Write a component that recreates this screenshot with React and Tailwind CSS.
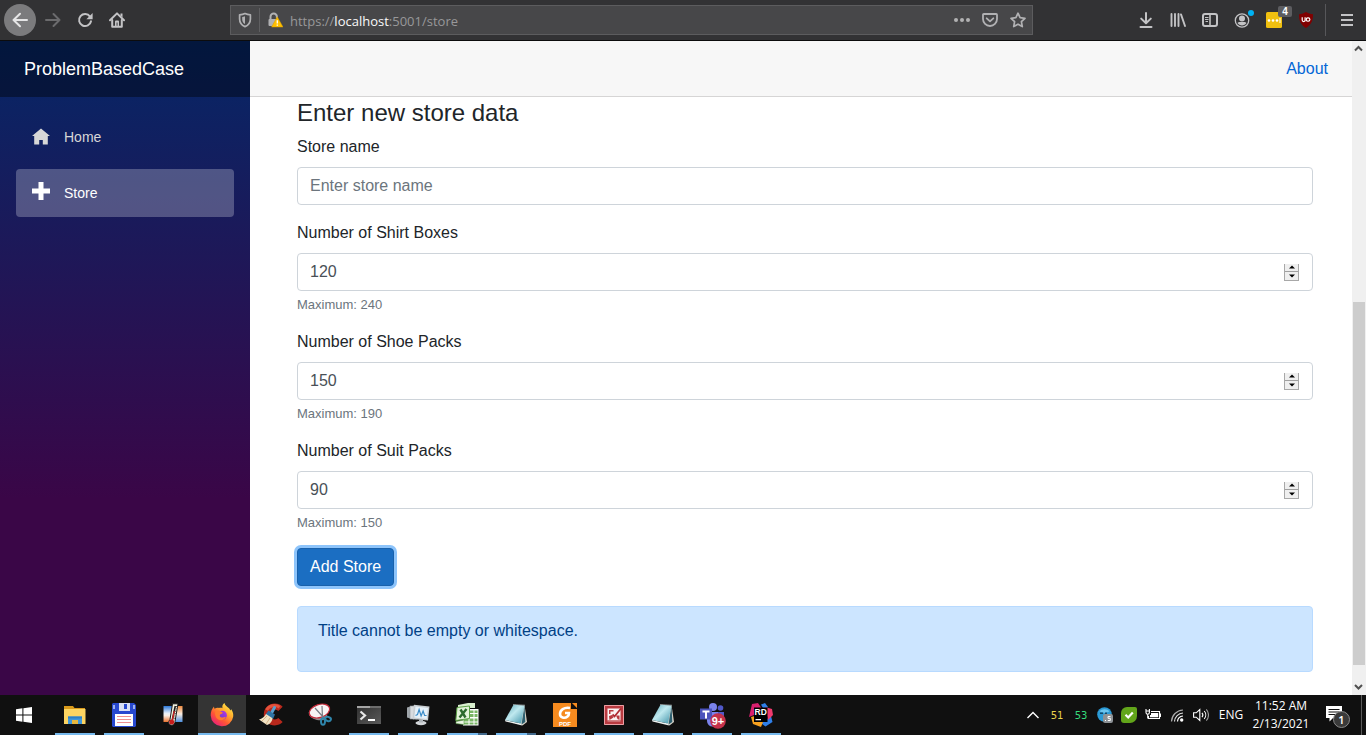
import { useState } from 'react';

/* ---------- Browser toolbar icons ---------- */

const stroke = { fill: 'none', stroke: 'currentColor', strokeWidth: 2, strokeLinecap: 'round', strokeLinejoin: 'round' };

function Ico({ children, size = 16 }) {
  return (
    <svg width={size} height={size} viewBox={`0 0 ${size} ${size}`} aria-hidden="true" className="block shrink-0">
      {children}
    </svg>
  );
}

const BackIcon = () => <Ico><path {...stroke} d="M15 8H1.5M8 1.8L1.5 8L8 14.2" /></Ico>;
const ForwardIcon = () => <Ico><path {...stroke} d="M1 8h13.5M8.5 2L14.5 8L8.5 14" /></Ico>;
const ReloadIcon = () => (
  <Ico>
    <path {...stroke} d="M13 4.6A6 6 0 1 0 14 9.2" />
    <path fill="currentColor" d="M15.6 1v6.2H9.4z" />
  </Ico>
);
const HomeIcon = () => (
  <Ico>
    <path {...stroke} d="M1 8.3L8 1.4L15 8.3" />
    <path {...stroke} d="M3.2 8V14.8H12.8V8" />
    <path fill="currentColor" d="M6 14.8V9.6a1 1 0 0 1 1-1h2a1 1 0 0 1 1 1v5.2zM11.5 1.4h2v4l-2-2z" />
    <path fill="#323234" d="M7.6 10.6h.9v3.2h-.9z" />
  </Ico>
);
const ShieldIcon = () => (
  <Ico>
    <path {...stroke} strokeWidth="1.7" d="M8 1.6C6 2.6 4.300 2.800 2.600 2.800V7c0 3.800 2 6.200 5.400 7.600 3.400-1.400 5.400-3.800 5.400-7.600V2.800C11.700 2.800 10 2.600 8 1.600z" />
    <path fill="currentColor" d="M8 4.300C7 4.800 6.100 5 5.200 5V7.200c0 2.200.9 3.800 2.800 4.800z" />
  </Ico>
);
const LockWarnIcon = () => (
  <Ico>
    <path fill="none" stroke="#b1b1b3" strokeWidth="2" d="M3.500 8V4.700a3.200 3.200 0 0 1 6.400 0v1.200" />
    <rect x="1.500" y="7" width="9.500" height="7" rx="1" fill="#b1b1b3" />
    <path d="M10.200 4.800L16 15H4.600z" fill="#ffbf00" stroke="#d89e00" strokeWidth=".5" strokeLinejoin="round" />
    <path d="M10.300 8.200v3.400M10.300 12.600v1.200" stroke="#fff" strokeWidth="1.300" />
  </Ico>
);
const DotsIcon = () => (
  <Ico><g fill="currentColor"><circle cx="2" cy="8" r="2" /><circle cx="8" cy="8" r="2" /><circle cx="14" cy="8" r="2" /></g></Ico>
);
const PocketIcon = () => (
  <Ico>
    <path {...stroke} strokeWidth="1.800" d="M1.800 2h12.400a.8.8 0 0 1 .8.8V7a7 7 0 0 1-14 0V2.800a.8.8 0 0 1 .8-.8z" />
    <path {...stroke} strokeWidth="1.800" d="M4.700 6.300L8 9.400l3.300-3.100" />
  </Ico>
);
const StarIcon = () => (
  <Ico><path {...stroke} strokeWidth="1.700" d="M8 1.200l2.100 4.500 4.900.6-3.600 3.400.9 4.900L8 12.200l-4.300 2.400.9-4.900L1 6.300l4.900-.6z" /></Ico>
);
const DownloadIcon = () => (
  <Ico><path {...stroke} d="M8 1v10M3.200 6.600L8 11.300l4.800-4.700M2.500 15h11" /></Ico>
);
const LibraryIcon = () => (
  <Ico><path {...stroke} d="M1.500 2v12M5 2v12M8.500 2v12M11 2.400L15 14" strokeWidth="1.900" /></Ico>
);
const SidebarIcon = () => (
  <Ico>
    <rect x="1" y="2" width="14" height="12" rx="2" {...stroke} />
    <path {...stroke} strokeWidth="1.600" d="M8 2v12" />
    <path stroke="currentColor" strokeWidth="1" d="M3 5.500h3.500M3 7.500h3.500M3.500 9.500h2.500" />
  </Ico>
);
const AccountIcon = () => (
  <Ico>
    <circle cx="8" cy="8.500" r="6.700" fill="none" stroke="currentColor" strokeWidth="1.300" />
    <circle cx="8" cy="6.500" r="3" fill="currentColor" />
    <path fill="currentColor" d="M3.500 11c1-1.300 2.200-1 2.800-1h3.400c.6 0 1.800-.3 2.800 1a5.300 5.300 0 0 1-9 0z" />
  </Ico>
);
const UblockIcon = () => (
  <Ico>
    <path fill="#800000" d="M8 0c2 1.300 4.400 2 7 2.300 0 6.500-1.500 10.300-7 13.700C2.500 12.600 1 8.800 1 2.300 3.600 2 6 1.300 8 0z" />
    <path fill="none" stroke="#fff" strokeWidth="1.200" d="M4.200 5.300v2.800a1.400 1.400 0 0 0 2.900 0V5.300v3.900" />
    <rect x="8.300" y="5.800" width="3.500" height="3.400" rx="1.500" fill="none" stroke="#fff" strokeWidth="1.200" />
  </Ico>
);
const MenuIcon = () => <Ico><path stroke="currentColor" strokeWidth="2" d="M2 3h12M2 8h12M2 13h12" /></Ico>;

function ToolButton({ label, children, className = '' }) {
  return (
    <button type="button" aria-label={label} className={`relative flex size-8 shrink-0 items-center justify-center ${className}`}>
      {children}
    </button>
  );
}

function BrowserBar() {
  return (
    <header className="flex h-[41px] shrink-0 items-center border-b border-[#0c0c0d] bg-[#323234] pl-1 pr-[3px] text-[#c3c3c5]">
      <nav className="flex items-center" aria-label="Browser navigation">
        <ToolButton label="Back" className="mr-px rounded-full bg-[#7b7b7d] text-[#e6e6e7]"><BackIcon /></ToolButton>
        <ToolButton label="Forward" className="text-[#6b6b6d]"><ForwardIcon /></ToolButton>
        <ToolButton label="Reload"><ReloadIcon /></ToolButton>
        <ToolButton label="Home page"><HomeIcon /></ToolButton>
      </nav>
      <div className="mx-[97px] flex h-[30px] min-w-0 flex-1 items-center border border-[#5c5c5e] bg-[#474749] text-[#b1b1b3]">
        <span className="flex w-7 shrink-0 justify-center"><ShieldIcon /></span>
        <span className="h-6 w-px bg-[#5f5f61]" />
        <span className="flex w-[30px] shrink-0 justify-center"><LockWarnIcon /></span>
        <a href="https://localhost:5001/store" className="min-w-0 flex-1 truncate pt-px font-['Open_Sans','Noto_Sans',sans-serif] text-[13px] leading-5 text-[#98989a]">
          https://<span className="text-[#f9f9fa]">localhost</span>:5001/store
        </a>
        <button type="button" aria-label="Page actions" className="flex w-7 justify-center"><DotsIcon /></button>
        <button type="button" aria-label="Save to Pocket" className="flex w-7 justify-center"><PocketIcon /></button>
        <button type="button" aria-label="Bookmark this page" className="flex w-7 justify-center"><StarIcon /></button>
      </div>
      <div className="flex items-center">
        <ToolButton label="Downloads"><DownloadIcon /></ToolButton>
        <ToolButton label="Library"><LibraryIcon /></ToolButton>
        <ToolButton label="Sidebars"><SidebarIcon /></ToolButton>
        <ToolButton label="Account">
          <AccountIcon />
          <span className="absolute right-1 top-1.5 size-1.5 rounded-full bg-[#00b3f4]" />
        </ToolButton>
        <ToolButton label="Password extension">
          <Ico>
            <rect width="16" height="16" rx="1.500" fill="#f0c010" />
            <g fill="#fff"><circle cx="3" cy="8.500" r="1.300" /><circle cx="7" cy="8.500" r="1.300" /><circle cx="11" cy="8.500" r="1.300" /><path d="M13.500 6h1v5h-1z" /></g>
          </Ico>
          <span className="absolute -right-0.5 top-0.5 flex h-[11px] w-3.5 items-center justify-center rounded-xs bg-[#5d5d60] font-['Liberation_Sans',sans-serif] text-[10px] font-bold leading-none text-white">4</span>
        </ToolButton>
        <ToolButton label="Content blocker"><UblockIcon /></ToolButton>
      </div>
      <span className="ml-[3px] mr-[5px] h-8 w-px bg-[#57575a]" />
      <ToolButton label="Open menu"><MenuIcon /></ToolButton>
    </header>
  );
}

/* ---------- Application ---------- */

function Sidebar() {
  return (
    <aside className="flex w-[250px] shrink-0 flex-col bg-[linear-gradient(180deg,rgb(5,39,103)_0%,#3a0647_70%)]">
      <div className="flex h-14 items-center bg-black/40 pl-6">
        <a href="#" className="text-lg text-white">ProblemBasedCase</a>
      </div>
      <nav className="flex flex-col gap-2 p-4 text-[14px]" aria-label="Main">
        <a href="#home" className="flex h-12 items-center rounded px-4 text-[#d7d7d7]">
          <span className="w-8">
            <svg width="18" height="18" viewBox="0 0 18 18" aria-hidden="true">
              <path fill="currentColor" d="M9 0.500L0 8h2.200v8.500h5V12h3.600v4.500h5V8H18z" />
            </svg>
          </span>
          Home
        </a>
        <a href="#store" aria-current="page" className="flex h-12 items-center rounded bg-white/25 px-4 text-white">
          <span className="w-8 pb-1">
            <svg width="18" height="18" viewBox="0 0 18 18" aria-hidden="true">
              <path fill="currentColor" d="M6.500 0h5v6.500H18v5h-6.500V18h-5v-6.500H0v-5h6.500z" />
            </svg>
          </span>
          Store
        </a>
      </nav>
    </aside>
  );
}

function NumberField({ id, label, initial, max }) {
  const [value, setValue] = useState(initial);
  const step = (d) => setValue((v) => Math.min(max, Math.max(0, Number(v) + d)));
  return (
    <div className="mb-4">
      <label htmlFor={id} className="mb-2 block">{label}</label>
      <div className="flex h-[38px] items-center rounded border border-[#ced4da] bg-white pr-[13px]">
        <input
          id={id}
          type="number"
          min={0}
          max={max}
          value={value}
          onChange={(e) => setValue(e.target.value)}
          aria-describedby={`${id}-help`}
          className="h-full min-w-0 flex-1 appearance-none rounded bg-transparent px-3 text-[#495057] outline-none [&::-webkit-inner-spin-button]:appearance-none"
        />
        <span className="flex w-[15px] flex-col border-x border-b border-[#a8a8a8] bg-[#efefef]">
          <button type="button" aria-label={`Increase ${label}`} onClick={() => step(1)} className="flex h-2 items-center justify-center border-b border-[#a0a0a0]">
            <svg width="6" height="4" viewBox="0 0 6 4" aria-hidden="true"><path d="M0 3.500L3 .5L6 3.500z" /></svg>
          </button>
          <button type="button" aria-label={`Decrease ${label}`} onClick={() => step(-1)} className="flex h-2 items-center justify-center">
            <svg width="6" height="4" viewBox="0 0 6 4" aria-hidden="true"><path d="M0 .5L3 3.500L6 .5z" /></svg>
          </button>
        </span>
      </div>
      <small id={`${id}-help`} className="mt-1 block text-[13px] leading-[19px] text-[#6c757d]">Maximum: {max}</small>
    </div>
  );
}

function StorePage() {
  return (
    <div className="flex min-w-0 flex-1 flex-col bg-white">
      <div className="flex h-14 shrink-0 items-center justify-end border-b border-[#d6d5d5] bg-[#f7f7f7] pr-6">
        <a href="#about" className="text-[#0366d6]">About</a>
      </div>
      <main className="flex-1 pl-[47px] pr-[39px] text-[#212529]">
        <h1 className="mb-2 pt-0.5 text-2xl leading-7">Enter new store data</h1>
        <form onSubmit={(e) => e.preventDefault()}>
          <div className="mb-4">
            <label htmlFor="store-name" className="mb-2 block">Store name</label>
            <input
              id="store-name"
              type="text"
              placeholder="Enter store name"
              className="block h-[38px] w-full rounded border border-[#ced4da] px-3 text-[#495057] outline-none placeholder:text-[#6c757d]"
            />
          </div>
          <NumberField id="shirt-boxes" label="Number of Shirt Boxes" initial={120} max={240} />
          <NumberField id="shoe-packs" label="Number of Shoe Packs" initial={150} max={190} />
          <NumberField id="suit-packs" label="Number of Suit Packs" initial={90} max={150} />
          <button type="submit" className="h-[38px] rounded border border-[#1861ac] bg-[#1b6ec2] px-3 text-white ring-3 ring-[#8dc4fb]">
            Add Store
          </button>
        </form>
        <div role="alert" className="mt-5 rounded border border-[#b8daff] bg-[#cce5ff] px-5 py-3 text-[#004085]">
          <p className="mb-4">Title cannot be empty or whitespace.</p>
        </div>
      </main>
    </div>
  );
}

function ScrollBar() {
  const chevron = { fill: 'none', stroke: '#505050', strokeWidth: 2 };
  return (
    <div className="flex w-3.5 shrink-0 flex-col items-center bg-[#f0f0f0]" aria-hidden="true">
      <svg width="14" height="17" viewBox="0 0 14 17"><path {...chevron} d="M3 9.500L6.500 6L10 9.500" /></svg>
      <span className="flex-[244]" />
      <span className="w-3 flex-[363] bg-[#cdcdcd]" />
      <span className="flex-[13]" />
      <svg width="14" height="17" viewBox="0 0 14 17"><path {...chevron} d="M3 7L6.500 10.500L10 7" /></svg>
    </div>
  );
}

/* ---------- Taskbar ---------- */

const WindowsLogo = () => (
  <Ico size={24}><path fill="#fff" d="M4 6.300L10.400 5.300V11.500H4zM11.400 5.200L20 4V11.500H11.400zM4 12.500h6.400v6.200L4 17.800zM11.400 12.500H20V20l-8.600-1.200z" /></Ico>
);
const ExplorerIcon = () => (
  <Ico size={24}>
    <path fill="#d99a1c" d="M1 3h9l1.500 2H22v4H1z" />
    <path fill="#fcd462" d="M1 6h21.500v15H1z" />
    <path fill="#3f97dc" d="M5 13.500h14V21h-4v-4H9v4H5z" />
    <path fill="#2c7fc5" d="M5 13.500h14v2H5z" />
    <path fill="#e9b93f" d="M9 17h6v4H9z" />
  </Ico>
);
const FloppyIcon = () => (
  <Ico size={24}>
    <path fill="#2748cf" d="M1 0h21l2 2v21l-1 1H1l-1-1V1z" />
    <path fill="#d7def4" d="M7 0h11v8H7z" /><path fill="#2748cf" d="M12 1h3v5h-3z" />
    <path fill="#fff" d="M3 11h18v12H3z" />
    <path stroke="#ee9090" strokeWidth="1.200" d="M5 13.500h14M5 16.500h14M5 19.500h14" />
    <path fill="#9bb0ee" d="M1 2h2v4H1zM21 2h2v4h-2z" />
  </Ico>
);
const ThermoIcon = () => (
  <Ico size={24}>
    <defs>
      <linearGradient id="th-l" x1="0" y1="0" x2="0" y2="1"><stop stopColor="#2c78d8" /><stop offset=".45" stopColor="#e8f0fa" /><stop offset=".6" stopColor="#fbeee4" /><stop offset="1" stopColor="#e8702c" /></linearGradient>
      <linearGradient id="th-r" x1="0" y1="0" x2="0" y2="1"><stop stopColor="#ee8a3e" /><stop offset=".5" stopColor="#faece0" /><stop offset="1" stopColor="#4b8fe0" /></linearGradient>
    </defs>
    <path fill="url(#th-l)" d="M2.500 3h9v16h-9z" /><path fill="url(#th-r)" d="M12 3h9.500v16H12z" />
    <path fill="#f6f5e2" stroke="#1a1a1a" strokeWidth="1" d="M11.500 .8h5.500L14 18.500c.3 2-1.200 3.700-3.300 3.700S7 20.300 7.800 18.300L9 16.500z" />
    <path stroke="#1a1a1a" strokeWidth="1.600" d="M14.300 3L11.300 17" />
    <path stroke="#d02020" strokeWidth="1.300" d="M13.300 8L11.200 18" /><circle cx="10.700" cy="19" r="2.500" fill="#c81c1c" />
    <path stroke="#444" strokeWidth="1" strokeDasharray="1 1.400" d="M15.700 3L13.200 16" />
  </Ico>
);
const FirefoxIcon = () => (
  <Ico size={24}>
    <defs>
      <linearGradient id="ff-a" x1=".9" y1="0" x2=".15" y2="1"><stop stopColor="#fff44f" /><stop offset=".35" stopColor="#ffb02e" /><stop offset=".65" stopColor="#ff5634" /><stop offset="1" stopColor="#e31587" /></linearGradient>
      <linearGradient id="ff-b" x1="1" y1="0" x2="0" y2="1"><stop stopColor="#b833e1" /><stop offset="1" stopColor="#5b3fd0" /></linearGradient>
    </defs>
    <path fill="url(#ff-a)" d="M14.500 0c.4 2.500 3 4 4.500 5.300.7.7 1 1.400 1.200 2.200l1.100-1.200C23 9 23.500 11 23.200 13.500A11.300 11.300 0 0 1 .7 12.500C.6 9 1.800 5.800 4 3.500c0 1 .2 1.700.6 2.300C6 4.800 7.500 4.600 9 5c1.300-.3 2.600-.2 3.500.2-.6-2 .2-4 2-5.200z" />
    <circle cx="12.300" cy="12.300" r="4.600" fill="url(#ff-b)" />
    <path fill="#ff7b2e" d="M5.500 8c2.500-1.200 4.500-.5 5.700.8 1 .3 1.700.6 1.500 1.200-.4 1-2.200.8-2.800 2-.5 1.300.7 2.800 2.500 2.500 1.500-.2 2-.9 3.500-.5-1.500 3.200-5 4-7.600 2.500C5.500 15 4.500 11 5.500 8z" />
  </Ico>
);
const CCleanerIcon = () => (
  <Ico size={26}>
    <path fill="none" stroke="#b8281c" strokeWidth="6" d="M22.500 6.800A8 8 0 1 0 22.500 18" />
    <path fill="none" stroke="#e4523c" strokeWidth="3" d="M21.500 5.200A9 9 0 0 0 8.500 8" />
    <path stroke="#5a9fce" strokeWidth="3" strokeLinecap="round" d="M16.500 5.500L13.500 11" />
    <path fill="#2f73a3" d="M10.500 8.500l6.500 4-2 4.500-7.500-4.500z" />
    <path fill="#f2e3c4" d="M8 12l6.500 4.300c-.3 3-2 5.700-5.500 6.700L1 17.500c3-.8 5.500-2.500 7-5.500z" />
    <path stroke="#cfa878" strokeWidth=".8" d="M9 14L4 19M12 16L8 22" />
  </Ico>
);
const SnipIcon = () => (
  <Ico size={26}>
    <ellipse cx="11" cy="12.500" rx="9.500" ry="5.500" transform="rotate(12 11 12.500)" fill="#8f8a8c" />
    <ellipse cx="12.500" cy="9" rx="10.500" ry="6.500" transform="rotate(-18 12.500 9)" fill="#f8f4f5" stroke="#c42a3a" strokeWidth="1.200" />
    <path stroke="#777c84" strokeWidth="1.200" d="M8 6l9 10M15 4L15.500 16" />
    <g fill="none" stroke="#2f86ac" strokeWidth="2"><ellipse cx="16" cy="19.500" rx="2" ry="3.200" /><ellipse cx="21" cy="17" rx="3" ry="2" transform="rotate(15 21 17)" /></g>
  </Ico>
);
const TerminalIcon = () => (
  <Ico size={24}>
    <defs><linearGradient id="tm" x1="0" y1="0" x2="1" y2="1"><stop stopColor="#303030" /><stop offset="1" stopColor="#5a5a5a" /></linearGradient></defs>
    <path fill="url(#tm)" d="M0 3h24v18H0z" /><path fill="#a5a5a5" d="M0 3h13v2H0z" /><path fill="#6d6d6d" d="M13 3h11v2H13z" />
    <path fill="none" stroke="#e8e8e8" strokeWidth="2.200" d="M3.500 8.500L8 12.500L3.500 16.500" /><path stroke="#fff" strokeWidth="2" d="M11 17h7" />
  </Ico>
);
const MonitorIcon = () => (
  <Ico size={24}>
    <path fill="#9fa5aa" d="M1 4.500l7-2v14l-7-2z" /><path fill="#d9dcdf" stroke="#8e959a" strokeWidth=".6" d="M4 3h7v13H4z" />
    <path fill="#c9ced2" d="M8 1.800L23.500 3.500l-1.500 14L6.500 16z" /><path fill="#e6f1f9" d="M9.500 3.500L22 5l-1.300 11L8.300 14.500z" />
    <path fill="none" stroke="#3c8cc8" strokeWidth="1.200" d="M9.500 12.500l2-1 1.600-5 2 6.500 2-5 1.500 4.500h2" />
    <ellipse cx="15" cy="20" rx="5.500" ry="2.200" fill="#d3d7da" /><path fill="#b0b6bb" d="M13 16.500h4v3h-4z" />
  </Ico>
);
const ExcelIcon = () => (
  <Ico size={24}>
    <path fill="#d9efcf" d="M3 2L13 0l7 0v5H3z" /><path fill="#fff" d="M8 6h15.500v16.500H8z" /><path fill="#79b565" d="M15 7.500h3.500V10H15zM19.500 7.500h3V10h-3zM15 11h3.500v3H15zM19.500 11h3v3h-3zM9 16h4.500v2.500H9zM14.500 15.500h4V18.500h-4zM19.500 15.500h3V18.500h-3zM9 19.500h4.500v2H9zM14.500 19.500h4v2h-4zM19.500 19.500h3v2h-3z" />
    <path fill="#e3f3da" stroke="#5ca046" strokeWidth="1" d="M2 4.500L14.500 3v12.500L.8 17.500z" />
    <path fill="none" stroke="#2c6a2c" strokeWidth="2.400" d="M5.500 6.500l5 8M11.500 6L4.500 14.500" />
    <path fill="#eef7ea" stroke="#5ca046" strokeWidth=".6" d="M1 18.500L9 17v4.500L1 20.500z" />
  </Ico>
);
const NotepadIcon = () => (
  <Ico size={24}>
    <defs><linearGradient id="np" x1="0" y1="0" x2="1" y2="1"><stop stopColor="#5aa5b5" /><stop offset=".45" stopColor="#bfe9ef" /><stop offset="1" stopColor="#3f92a8" /></linearGradient></defs>
    <path fill="#d5d2c8" d="M20.500 2l2.500 17-4.500 3.500-3-2z" />
    <path fill="#2c5f70" d="M20.500 2.500l.8 16.500-3.800 2.500z" />
    <path fill="#f0f3f2" d="M1 17l16 3.500 1 2L1.500 18.500z" />
    <path fill="url(#np)" d="M9.500 1.800L20.500 2.500L17 20.500L1 17z" />
    <path stroke="#e0e7e9" strokeDasharray="1 1" d="M9.500 1.500L21 2.200" />
  </Ico>
);
const FoxitIcon = () => (
  <Ico size={24}>
    <path fill="#f68b1f" d="M0 0h24v24H0z" /><path fill="#101010" d="M18 0h1l5 5v1h-6z" /><path fill="#f68b1f" d="M19.500 0H24v4.500z" />
    <path fill="none" stroke="#fff" strokeWidth="2.600" d="M17 5C11 4 7 7 7 11c0 3.500 4.500 5 7.500 2.500 1.200-1 1.500-2.200 1.500-3.500h-4" />
    <text x="12" y="23" textAnchor="middle" fontFamily="Liberation Sans, sans-serif" fontWeight="bold" fontSize="6" fill="#fff">PDF</text>
  </Ico>
);
const RedAppIcon = () => (
  <Ico size={24}>
    <path fill="#b93a40" d="M2 2h20v20H2z" /><path fill="none" stroke="#e9a0a4" d="M2.500 2.500h19v19h-19z" />
    <path fill="#fbf3f3" d="M5.500 5.500h13v12h-13z" /><path fill="#c96a6e" d="M5.500 17.500h13v1.500h-13z" />
    <path fill="#b93a40" d="M7 7h4.500v1.500H8.500V11H7z" />
    <path fill="none" stroke="#b02a32" strokeWidth="1.800" d="M10.500 11.500l2 2L19 5.500" /><path fill="#b93a40" d="M7 13l3-1 1.500 2.500L7.500 17zM14 12.500h3.500V17l-2-1z" />
  </Ico>
);
const TeamsIcon = () => (
  <Ico size={28}>
    <circle cx="15" cy="6" r="4" fill="#7b83eb" /><circle cx="22.500" cy="7" r="2.800" fill="#5059c9" />
    <path fill="#5059c9" d="M18 11h8v7a4 4 0 0 1-8 2z" /><path fill="#7b83eb" d="M9 11h11v9a5.500 5.500 0 0 1-11 0z" />
    <path fill="#4b53bc" d="M2 7.500h12v11H2z" /><path stroke="#fff" strokeWidth="2" d="M4.500 10.500h7M8 10.500v7" />
    <circle cx="20" cy="20" r="7.800" fill="#c4314b" />
    <text x="20" y="24" textAnchor="middle" fontFamily="Liberation Sans, sans-serif" fontWeight="bold" fontSize="11" fill="#fff">9+</text>
  </Ico>
);
const RiderIcon = () => (
  <Ico size={24}>
    <path fill="#d9206e" d="M3 1l6-1 4 6v6H5L0 14z" /><path fill="#2f7fe8" d="M12 1.500l4-1.500 3 4-4 3zM15 18l7-5 1.500 6-7 4.500-4-3z" />
    <path fill="#f03a6e" d="M16 4l7 2 1 6-5 5z" /><path fill="#f7a11f" d="M2 14l4-1 8 6-2 5-8-3z" />
    <path fill="#000" d="M5 4.500h13.500V19H5z" />
    <text x="11.700" y="12" textAnchor="middle" fontFamily="Liberation Sans, sans-serif" fontWeight="bold" fontSize="8.500" fill="#fff">RD</text>
    <path fill="#fff" d="M6.500 16h5.500v1.300H6.500z" />
  </Ico>
);

const apps = [
  { name: 'File Explorer', Icon: ExplorerIcon, state: 'open' },
  { name: 'Total Commander', Icon: FloppyIcon, state: 'open' },
  { name: 'Temperature monitor', Icon: ThermoIcon, state: 'idle' },
  { name: 'Firefox', Icon: FirefoxIcon, state: 'active' },
  { name: 'CCleaner', Icon: CCleanerIcon, state: 'idle' },
  { name: 'Snipping Tool', Icon: SnipIcon, state: 'idle' },
  { name: 'Terminal', Icon: TerminalIcon, state: 'open' },
  { name: 'System monitor', Icon: MonitorIcon, state: 'open' },
  { name: 'Excel', Icon: ExcelIcon, state: 'stacked' },
  { name: 'Notepad', Icon: NotepadIcon, state: 'stacked' },
  { name: 'PDF reader', Icon: FoxitIcon, state: 'open' },
  { name: 'Image viewer', Icon: RedAppIcon, state: 'open' },
  { name: 'Notepad notes', Icon: NotepadIcon, state: 'open' },
  { name: 'Teams', Icon: TeamsIcon, state: 'open' },
  { name: 'Rider', Icon: RiderIcon, state: 'open' },
];

function AppButton({ name, Icon, state }) {
  return (
    <button type="button" aria-label={name} className={`flex h-10 w-12 shrink-0 flex-col items-center ${state === 'active' ? 'bg-[#343434]' : ''}`}>
      <span className="flex h-[38px] items-center justify-center pt-0.5"><Icon /></span>
      {state === 'active' && <span className="h-0.5 w-full bg-[#76b9ed]" />}
      {state === 'open' && <span className="h-0.5 w-10 bg-[#76b9ed]" />}
      {state === 'stacked' && (
        <span className="flex h-0.5 w-10"><span className="flex-1 bg-[#76b9ed]" /><span className="w-[9px] bg-[#41688a]" /></span>
      )}
    </button>
  );
}

function TrayItem({ label, children }) {
  return (
    <button type="button" aria-label={label} className="flex h-10 w-6 shrink-0 items-center justify-center">{children}</button>
  );
}

function Taskbar() {
  return (
    <footer className="flex h-10 shrink-0 items-center overflow-hidden bg-[#101010] font-['Open_Sans','Noto_Sans',sans-serif] text-[12px] text-white">
      <button type="button" aria-label="Start" className="mr-[3px] flex h-10 w-12 shrink-0 items-center justify-center"><WindowsLogo /></button>
      <div className="flex gap-px">
        {apps.map((app) => <AppButton key={app.name} {...app} />)}
      </div>
      <div className="ml-auto flex items-center">
        <TrayItem label="Show hidden icons"><Ico><path fill="none" stroke="#fff" strokeWidth="1.400" d="M2.500 11L8 5.500l5.500 5.500" /></Ico></TrayItem>
        <span className="w-6 text-center font-['DejaVu_Sans',sans-serif] text-[10px] text-[#e8d44c]">51</span>
        <span className="w-6 text-center font-['DejaVu_Sans',sans-serif] text-[10px] text-[#35dc7c]">53</span>
        <TrayItem label="Cloud sync">
          <Ico>
            <circle cx="7.500" cy="7.500" r="7.300" fill="#2b9ad6" /><path fill="#6cc4ee" d="M2.500 4.500c2-3 8-3 10 0L8 6z" /><path fill="#12486a" d="M3 5.500h3V7H3zM8 5.500h2V7H8z" />
            <rect x="6" y="7" width="10" height="9" rx="2" fill="#8d9296" />
            <path fill="none" stroke="#fff" strokeWidth="1" d="M8 13.500h1M13.500 9.500h-2.500v1.800h2.300v2.200h-2.500" />
          </Ico>
        </TrayItem>
        <TrayItem label="Antivirus">
          <Ico>
            <path fill="#62a51a" d="M6 0h8a2 2 0 0 1 2 2v7a7 7 0 0 1-7 7H3a3 3 0 0 1-3-3V6a6 6 0 0 1 6-6z" />
            <path fill="none" stroke="#fff" strokeWidth="2.200" d="M4.500 7.800L7.200 10.500L11.800 5.500" />
          </Ico>
        </TrayItem>
        <TrayItem label="Battery">
          <Ico>
            <path fill="none" stroke="#fff" strokeWidth="1.100" d="M6 4.500h8.500v7H3.500V9M1 2v3.500a1.600 1.600 0 0 0 3.400 0V2M.5 4h4.500M2.700 7v4.500" />
            <path fill="#fff" d="M6 6h7.200v4.200H5V8h1zM15 6.500h1v3.500h-1z" />
          </Ico>
        </TrayItem>
        <TrayItem label="Wi-Fi">
          <Ico>
            <g fill="none" strokeWidth="1.200">
              <path stroke="#aaa" d="M2.500 14.500A12 12 0 0 1 14 3" /><path stroke="#ddd" d="M5.500 14.500A9 9 0 0 1 14 6" />
              <path stroke="#fff" d="M8.500 14.500A6 6 0 0 1 14 9" />
            </g>
            <circle cx="12.700" cy="13" r="1.700" fill="#fff" />
          </Ico>
        </TrayItem>
        <TrayItem label="Volume">
          <Ico>
            <g fill="none" stroke="#fff" strokeWidth="1.100">
              <path d="M.6 5.800h2.600L6.800 2.500v11L3.200 10.200H.6z" /><path d="M9 5.800a3.500 3.500 0 0 1 0 4.400M11.200 4a6 6 0 0 1 0 8" /><path stroke="#999" d="M13.300 2.300a8.500 8.500 0 0 1 0 11.400" />
            </g>
          </Ico>
        </TrayItem>
        <button type="button" className="w-9 text-center">ENG</button>
        <button type="button" className="w-16 text-center leading-[18px]">
          <span className="block">11:52 AM</span>
          <span className="block">2/13/2021</span>
        </button>
        <button type="button" aria-label="Notifications, 1 new" className="flex h-10 w-12 items-center justify-center">
          <Ico size={26}>
            <path fill="#fff" d="M2 4h16v12H9l-3.500 3.500V16H2z" />
            <path stroke="#101010" strokeWidth="1.200" d="M4.500 7.500h11M4.500 10h11M4.500 12.500h8" />
            <circle cx="17.500" cy="17.500" r="8" fill="#3a3a3a" stroke="#8a8a8a" />
            <text x="17.500" y="21.500" textAnchor="middle" fontFamily="Open Sans, sans-serif" fontWeight="600" fontSize="11" fill="#fff">1</text>
          </Ico>
        </button>
        <span className="mr-1 h-10 w-px bg-[#5a5a5a]" />
      </div>
    </footer>
  );
}

export default function App() {
  return (
    <div className="flex min-h-screen flex-col font-['Liberation_Sans',Arial,sans-serif] text-base">
      <BrowserBar />
      <div className="flex flex-1">
        <Sidebar />
        <StorePage />
        <ScrollBar />
      </div>
      <Taskbar />
    </div>
  );
}
